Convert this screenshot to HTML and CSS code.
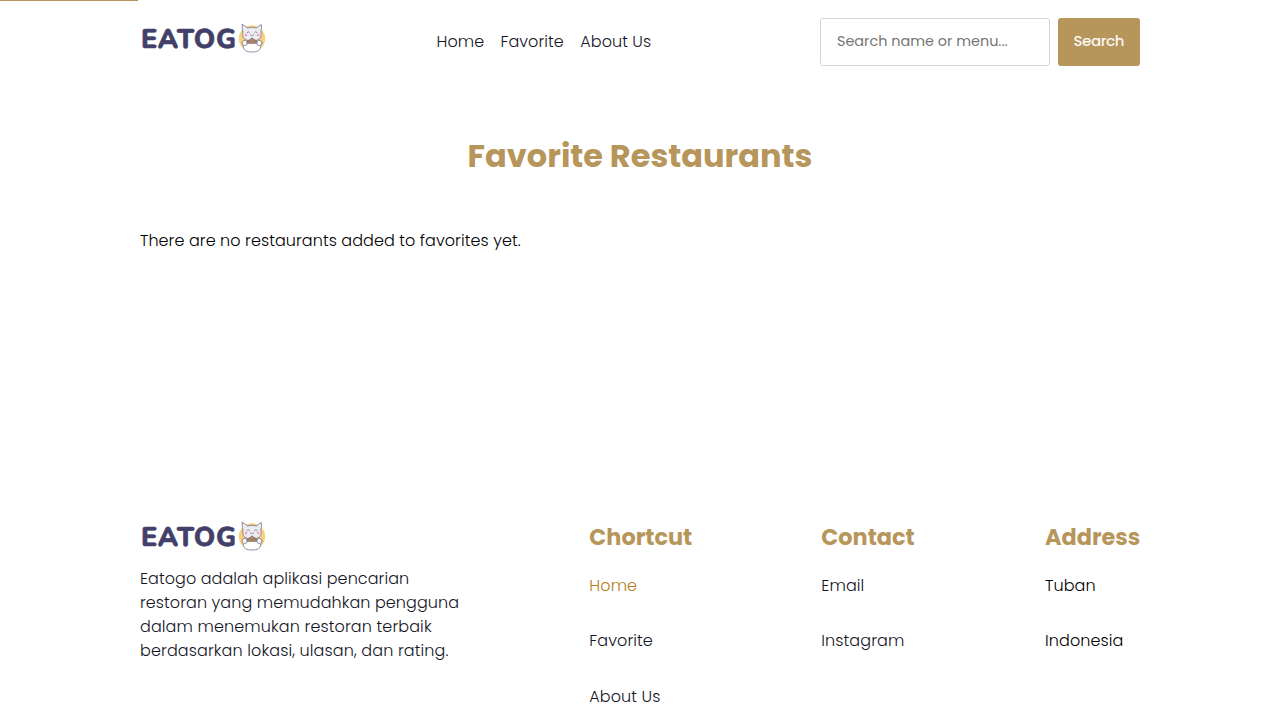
FILE: index.html
```html
<!DOCTYPE html>
<html lang="en">
<head>
<meta charset="utf-8">
<title>Eatogo</title>
<link rel="stylesheet" href="styles.css">
</head>
<body>
<div class="progress"></div>
<header class="header">
  <div class="brand">
    <svg class="logo" viewBox="0 0 128 36" role="img" aria-label="Eatogo">
      <g id="logo">
        <text class="logo-text" x="1" y="27.500" textLength="95" lengthAdjust="spacing">EATOG</text>
        <circle cx="112" cy="18.500" r="13.200" fill="#f8d07c"/>
        <g stroke="#77748f" stroke-width=".8" stroke-linejoin="round" stroke-linecap="round">
          <path fill="#fff" d="M103.500 23C102 31 107 32 112 32S122 31 120.500 23Z"/>
          <path fill="#ececf3" d="M102.200 4.600Q104.500 5 107.400 8Q112 6.500 116.600 8Q119.500 5 121.400 4.600Q121.800 9 120.800 12C122.500 18 118.500 21 112 21S101.500 18 103 12Q101.900 9 102.200 4.600Z"/>
          <path fill="#a9826e" stroke="#84695f" d="M106.800 23Q107.200 19.800 110 19.700Q112 16.500 114 19.600Q117 19.800 117.400 23Z"/>
          <ellipse cx="104.700" cy="23" rx="2.600" ry="2.600" fill="#fff"/>
          <ellipse cx="119.400" cy="23" rx="2.600" ry="2.600" fill="#fff"/>
          <path fill="none" d="M107 12.500l1.600-.7 1 1M114.500 12.800l1-1 1.600.7M110.500 15q1 1.300 1.500 0q.7 1.300 1.700 0"/>
        </g>
        <circle cx="106" cy="15" r="1.300" fill="#f5a0b0"/><circle cx="118.200" cy="15" r="1.300" fill="#f5a0b0"/>
      </g>
    </svg>
  </div>
  <nav class="nav"><a class="nav-home">Home</a><a class="nav-favorite">Favorite</a><a class="nav-about">About Us</a></nav>
  <form class="search"><input class="search-input" type="text" placeholder="Search name or menu..."><button class="search-button" type="button">Search</button></form>
</header>
<main class="main">
  <h1 class="title">Favorite Restaurants</h1>
  <p class="empty">There are no restaurants added to favorites yet.</p>
</main>
<footer class="footer">
  <section class="about">
    <svg class="logo" viewBox="0 0 128 36" role="img" aria-label="Eatogo"><use href="#logo"/></svg>
    <p class="description">Eatogo adalah aplikasi pencarian<br>restoran yang memudahkan pengguna<br><span class="loose">dalam menemukan restoran terbaik<br>berdasarkan lokasi, ulasan, dan rating.</span></p>
  </section>
  <section class="column"><h2>Chortcut</h2><a class="active">Home</a><a>Favorite</a><a>About Us</a></section>
  <section class="column"><h2>Contact</h2><a>Email</a><a>Instagram</a></section>
  <section class="column address"><h2>Address</h2><p>Tuban</p><p>Indonesia</p></section>
</footer>
</body>
</html>
```
FILE: styles.css
```css
* { box-sizing: border-box; }
html, body { height: 100%; }
body { margin: 0; background: #fff; color: #000; font: 300 16px/24px Poppins, Inter, sans-serif; overflow: hidden; letter-spacing: .065px; }
h1, h2, p { margin: 0; }
.progress { position: absolute; top: 0; left: 0; width: 138px; height: 1px; background: #b7965b; }
.header, .main, .footer { width: 1000px; margin: 0 auto; }
.header { height: 84px; display: grid; grid-template-columns: 296.500px 1fr 320px; align-items: center; }
.logo { display: block; width: 128px; height: 36px; }
.brand { padding-bottom: 8px; }
.logo-text { font: 800 27px Nunito, Lato, sans-serif; letter-spacing: 0; fill: #423f69; stroke: #423f69; stroke-width: .6px; stroke-linejoin: round; text-rendering: geometricPrecision; }
.nav { display: flex; color: #15151f; letter-spacing: .06px; }
.nav-home { width: 64px; }
.nav-favorite { width: 79.800px; }
.search { display: flex; gap: 8px; margin: 0; }
.search-input { width: 230px; height: 48px; padding: 0 16px 1px; border: 1px solid #d5d5d5; border-radius: 3px; font: 400 14.400px/24px Poppins, Inter, sans-serif; outline: 0; }
.search-input::placeholder { color: #757575; opacity: 1; }
.search-button { width: 82px; height: 48px; padding: 0 0 2px; border: 0; border-radius: 3px; background: #b7965b; color: #fff; font: 400 14.400px/24px Poppins, Inter, sans-serif; -webkit-text-stroke: .2px #fff; }
.title { height: 145px; padding-top: 48px; text-align: center; font: 700 32px/48px Poppins, Inter, sans-serif; letter-spacing: 0; color: #b7965b; }
.main { height: 434px; }
.footer { display: grid; grid-template-columns: 449.300px 232px 223.700px 95px; color: #15151f; }
.description { padding-top: 13px; }
.loose { letter-spacing: .115px; }
.column { display: flex; flex-direction: column; }
.column h2 { height: 55.800px; padding-top: 1px; font: 700 22.400px/36px Poppins, Inter, sans-serif; letter-spacing: 0; color: #b7965b; }
.column a, .column p { height: 55.400px; letter-spacing: .1px; }
.column a:nth-of-type(2) { height: 56px; }
.column .active { color: #b17f26; }
.address p { color: #000; }
```
